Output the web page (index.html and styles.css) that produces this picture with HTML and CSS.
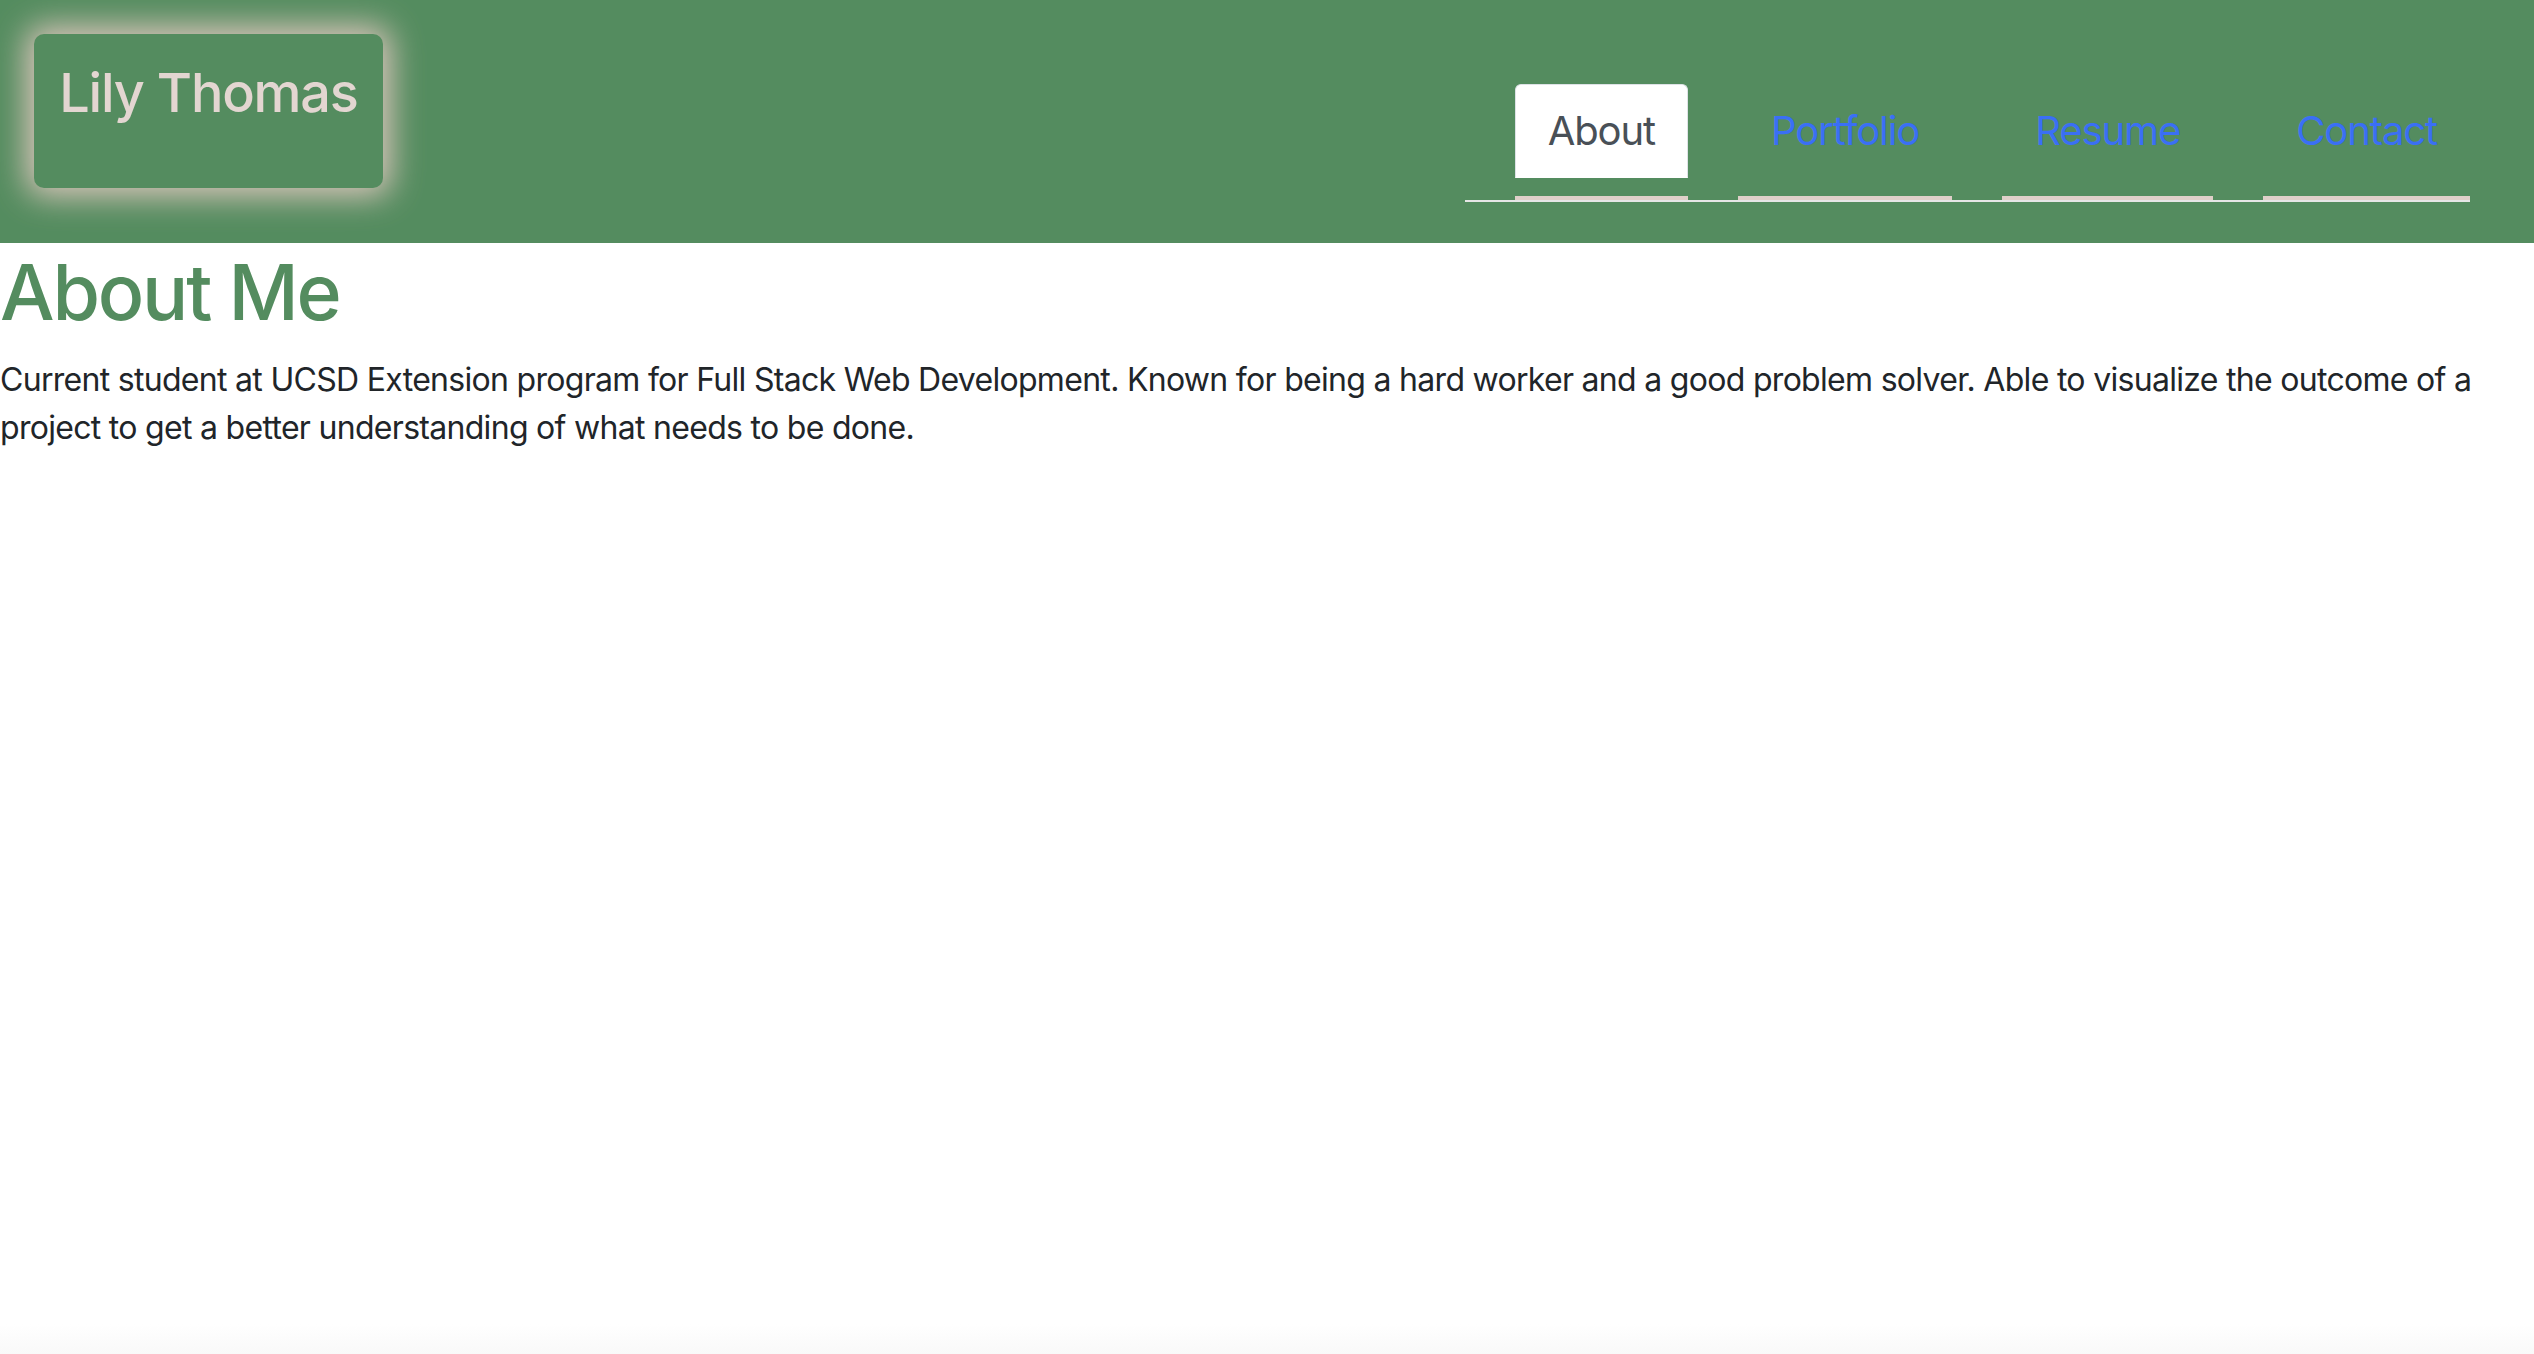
FILE: index.html
```html
<!DOCTYPE html>
<html lang="en">
<head>
<meta charset="utf-8">
<title>Lily Thomas</title>
<link rel="stylesheet" href="styles.css">
</head>
<body>
<header class="site-header">
  <div class="brand">
    <h1 class="brand-name">Lily Thomas</h1>
  </div>
  <nav class="site-nav">
    <ul class="tabs">
      <li class="tab-item"><a class="tab-link active" href="#about">About</a></li>
      <li class="tab-item"><a class="tab-link" href="#portfolio">Portfolio</a></li>
      <li class="tab-item"><a class="tab-link" href="#resume">Resume</a></li>
      <li class="tab-item"><a class="tab-link" href="#contact">Contact</a></li>
    </ul>
  </nav>
</header>
<main class="content">
  <h2 class="section-title">About Me</h2>
  <p class="section-text">Current student at UCSD Extension program for Full Stack Web Development. Known for being a hard worker and a good problem solver. Able to visualize the outcome of a project to get a better understanding of what needs to be done.</p>
</main>
</body>
</html>
```
FILE: styles.css
```css
html {
  min-height: 100%;
  background: linear-gradient(to bottom, #ffffff calc(100% - 30px), #f9f9f9 100%);
}
body {
  margin: 0;
  font-family: Inter, "Noto Sans", "Liberation Sans", sans-serif;
  color: #212529;
}
.site-header {
  display: flex;
  justify-content: space-between;
  align-items: flex-start;
  background: #548c5f;
  padding: 34px 64px 41px 34px;
}
.brand {
  width: 349px;
  height: 154px;
  box-sizing: border-box;
  background: #548c5f;
  border-radius: 10px;
  box-shadow: 0 0 32px 8px #ddc6bd;
  padding: 27px 0 0 0;
  text-align: center;
}
.brand-name {
  margin: 0;
  font-size: 54px;
  font-weight: 500;
  line-height: 1.2;
  color: #e3d6d1;
  letter-spacing: -1.2px;
}
.site-nav {
  margin-top: 50px;
}
.tabs {
  display: flex;
  list-style: none;
  margin: 0;
  padding: 0;
  border-bottom: 2px solid #e6e6e6;
}
.tab-item {
  margin-left: 50px;
  padding-bottom: 18px;
  border-bottom: 4px solid #dfd0c9;
}
.tab-link {
  display: block;
  padding: 16px 32px;
  font-size: 40px;
  line-height: 60px;
  color: #3a6ff5;
  text-decoration: none;
  letter-spacing: -1.1px;
  border: 1px solid transparent;
  border-radius: 6px 6px 0 0;
}
.tab-link.active {
  background: #ffffff;
  color: #495057;
  border-color: #dee2e6 #dee2e6 #ffffff;
}
.content {
  padding: 0;
}
.section-title {
  margin: 1px 0 16px;
  font-size: 77px;
  font-weight: 500;
  line-height: 96px;
  color: #548c5f;
  letter-spacing: -2.2px;
}
.section-text {
  margin: 0;
  font-size: 32px;
  line-height: 48px;
  color: #212529;
  letter-spacing: -0.7px;
}
```
